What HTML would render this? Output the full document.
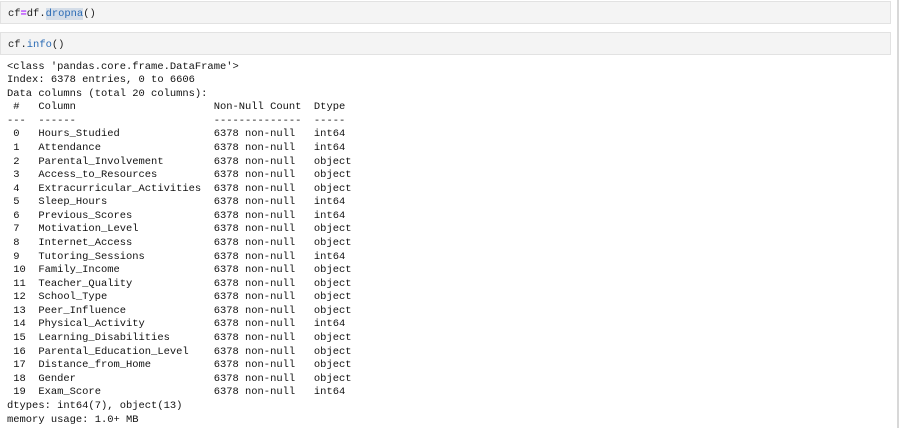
<!DOCTYPE html>
<html><head><style>
body{margin:0;background:#fff;width:900px;height:428px;overflow:hidden;position:relative;font-family:"Liberation Mono",monospace;}
.cell{position:absolute;left:0;width:889px;height:21px;background:#f4f4f4;border:1px solid #e2e2e2;}
.cell span.t{position:absolute;left:7px;top:5px;font-size:10.45px;line-height:14px;color:#222;white-space:pre;}
.p{color:#aa22ff;font-weight:bold}
.b{color:#2a6bb5}
.hl{background:#d4dde8}
pre{position:absolute;left:7px;top:60.5px;margin:0;font-family:"Liberation Mono",monospace;font-size:10.45px;line-height:13.58px;color:#111;}
.vl{position:absolute;left:897px;top:0;width:2px;height:428px;background:#d8d8d8;}
</style></head><body>
<div class="cell" style="top:1px"><span class="t">cf<span class="p">=</span>df.<span class="b hl">dropna</span>()</span></div>
<div class="cell" style="top:32px"><span class="t">cf.<span class="b">info</span>()</span></div>
<div class="vl"></div>
<pre>&lt;class 'pandas.core.frame.DataFrame'&gt;
Index: 6378 entries, 0 to 6606
Data columns (total 20 columns):
 #   Column                      Non-Null Count  Dtype 
---  ------                      --------------  ----- 
 0   Hours_Studied               6378 non-null   int64 
 1   Attendance                  6378 non-null   int64 
 2   Parental_Involvement        6378 non-null   object
 3   Access_to_Resources         6378 non-null   object
 4   Extracurricular_Activities  6378 non-null   object
 5   Sleep_Hours                 6378 non-null   int64 
 6   Previous_Scores             6378 non-null   int64 
 7   Motivation_Level            6378 non-null   object
 8   Internet_Access             6378 non-null   object
 9   Tutoring_Sessions           6378 non-null   int64 
 10  Family_Income               6378 non-null   object
 11  Teacher_Quality             6378 non-null   object
 12  School_Type                 6378 non-null   object
 13  Peer_Influence              6378 non-null   object
 14  Physical_Activity           6378 non-null   int64 
 15  Learning_Disabilities       6378 non-null   object
 16  Parental_Education_Level    6378 non-null   object
 17  Distance_from_Home          6378 non-null   object
 18  Gender                      6378 non-null   object
 19  Exam_Score                  6378 non-null   int64 
dtypes: int64(7), object(13)
memory usage: 1.0+ MB</pre>
</body></html>
